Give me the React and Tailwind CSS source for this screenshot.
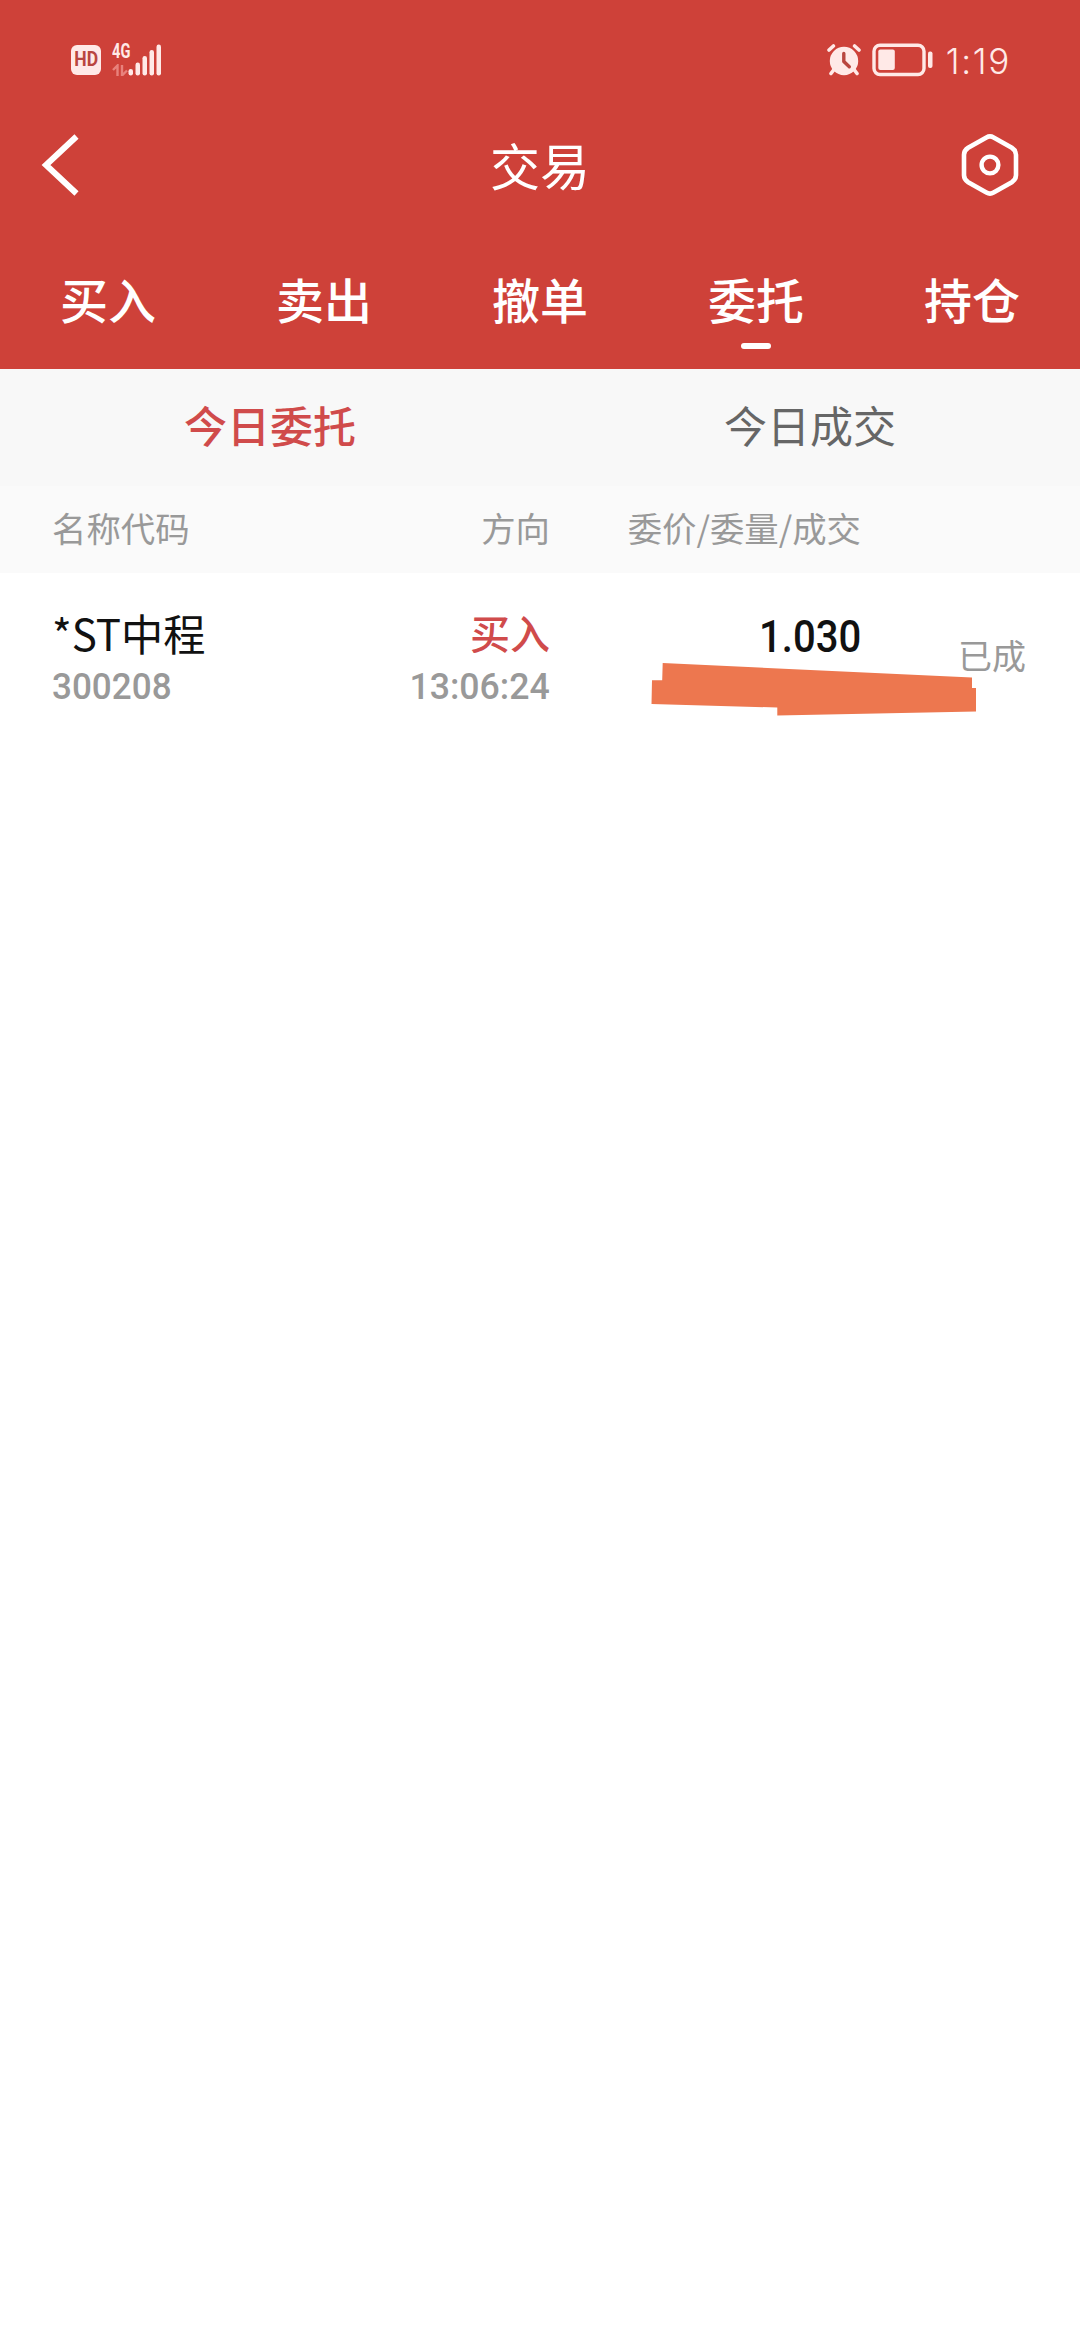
import { useState } from 'react';

const tabs = ['买入', '卖出', '撤单', '委托', '持仓'];
const subTabs = ['今日委托', '今日成交'];

const orders = [
  {
    id: 1,
    name: '*ST中程',
    code: '300208',
    side: '买入',
    time: '13:06:24',
    price: '1.030',
    status: '已成'
  }
];

const StatusBar = () => (
  <div className="h-[120px] pl-[71px] pr-[69px] flex items-center justify-between text-[#ffe9e7]">
    <div className="flex items-center">
      <div className="w-[30px] h-[30px] rounded-[6px] bg-[#ffe9e7] text-[#b9463f] flex items-center justify-center font-['Roboto',sans-serif] font-bold text-[19.5px] leading-none">
        <span className="inline-block scale-x-[0.9]">HD</span>
      </div>
      <div className="ml-[11px] w-[18px] h-[32px] flex flex-col justify-between">
        <span className="inline-block origin-left scale-x-[0.73] font-['Roboto',sans-serif] font-bold text-[20px] leading-[14px]">4G</span>
        <svg width="18" height="12" viewBox="0 0 18 12" fill="none" stroke="#e8827c" strokeWidth="2.4">
          <path d="M1 6L5.5 1.5V12M10 1V11.5L15 6.5" />
        </svg>
      </div>
      <svg className="-ml-[2px]" width="34" height="32" viewBox="0 0 34 32" fill="currentColor">
        <rect x="0.5" y="25" width="4.5" height="6.5" rx="2.2" />
        <rect x="7.5" y="18.5" width="4.5" height="13" rx="2.2" />
        <rect x="14.5" y="12" width="4.5" height="19.5" rx="2.2" />
        <rect x="21.5" y="6" width="4.5" height="25.5" rx="2.2" />
        <rect x="28.5" y="0.5" width="4.5" height="31" rx="2.2" />
      </svg>
    </div>

    <div className="flex items-center">
      <svg width="34" height="32" viewBox="0 0 34 32" fill="none" strokeLinecap="round">
        <circle cx="17" cy="17" r="14.2" fill="#ffe9e7" />
        <path d="M2 6L6.4 2M32 6L27.6 2" stroke="#ffe9e7" strokeWidth="3.6" />
        <path d="M7 25.5L4 29.5M27 25.5L30 29.5" stroke="#ffe9e7" strokeWidth="3.6" />
        <path d="M16.8 9.5V17.5L22.3 22.8" stroke="#b9463f" strokeWidth="3.4" strokeLinejoin="round" />
      </svg>
      <svg className="ml-[11px]" width="61" height="34" viewBox="0 0 61 34" fill="none">
        <rect x="2" y="2.2" width="50" height="29.3" rx="6" stroke="currentColor" strokeWidth="3.4" />
        <rect x="6.3" y="6.6" width="16.5" height="20.4" rx="2" fill="currentColor" />
        <rect x="56" y="8.5" width="4.5" height="16.5" rx="2" fill="currentColor" />
      </svg>
      <span className="ml-[13px] pt-[2px] font-['Inter',sans-serif] font-light text-[35px] leading-none tracking-[1.7px]">1:19</span>
    </div>
  </div>
);

const NavBar = () => (
  <div className="h-[90px] pl-[41px] pr-[60px] grid grid-cols-3 items-center">
    <svg width="38" height="62" viewBox="0 0 38 62" fill="none" stroke="white" strokeWidth="6">
      <path d="M35.5 2.5L5 31L35.5 59.5" />
    </svg>
    <h1 className="pl-[19px] pb-[3px] text-center text-[50px] leading-none">交易</h1>
    <svg className="justify-self-end" width="60" height="64" viewBox="0 0 60 64" fill="none" stroke="white">
      <path
        d="M26.4 4.4Q30 2.4 33.6 4.4L51.8 14.8Q56 17.5 56 21.8V42.2Q56 46.5 51.8 49.2L33.6 59.6Q30 61.6 26.4 59.6L8.2 49.2Q4 46.5 4 42.2V21.8Q4 17.5 8.2 14.8Z"
        strokeWidth="4.6"
      />
      <circle cx="30" cy="32" r="8.4" strokeWidth="4.4" />
    </svg>
  </div>
);

const OrderRow = ({ order }) => (
  <div className="relative h-[150px] pl-[52px] pr-[54px] pt-[34px] flex leading-none">
    <div className="w-[248px]">
      <div className="h-[50px] flex items-center text-[43px] text-[#111]">
        <span className="inline-block origin-left scale-x-[0.98] whitespace-nowrap">{order.name}</span>
      </div>
      <div className="h-[59px] flex items-center text-[#999]">
        <span className="inline-block origin-left scale-x-[0.935] font-['Roboto',sans-serif] font-medium text-[37.5px]">{order.code}</span>
      </div>
    </div>
    <div className="w-[250px] flex flex-col items-end">
      <div className="h-[50px] flex items-center text-[40px] font-medium text-[#d04b4b]">{order.side}</div>
      <div className="h-[59px] flex items-center text-[#999]">
        <span className="inline-block origin-right scale-x-[0.95] font-['Roboto',sans-serif] font-medium text-[37.5px]">{order.time}</span>
      </div>
    </div>
    <div className="w-[311px] h-[60px] flex items-center justify-end text-[#111]">
      <span className="inline-block origin-right scale-x-[0.91] font-['Roboto',sans-serif] font-medium text-[44px]">{order.price}</span>
    </div>
    <div className="flex-1 h-[96px] flex items-center justify-end text-[34px] text-[#999]">{order.status}</div>

    {/* Volume is covered by a marker stroke */}
    <svg className="absolute left-[651px] top-[89px]" width="326" height="54" viewBox="0 0 326 54">
      <path d="M11.7 1L321 15.5V26H325V49.5L126.3 53.5V45.5L0.5 42L1 18.3H11.2Z" fill="#ed774f" />
    </svg>
  </div>
);

const App = () => {
  const [activeTab, setActiveTab] = useState('委托');
  const [activeSubTab, setActiveSubTab] = useState('今日委托');

  return (
    <div className="w-[1080px] h-[2340px] overflow-hidden bg-white font-['Noto_Sans_CJK_SC',sans-serif]">
      {/* Header */}
      <header className="h-[369px] bg-[#ce4139] text-white">
        <StatusBar />
        <NavBar />
        <nav className="h-[159px] grid grid-cols-5">
          {tabs.map((tab) => (
            <button
              key={tab}
              onClick={() => setActiveTab(tab)}
              className="pt-[64px] flex flex-col items-center text-[48px] font-medium leading-[48px]"
            >
              {tab}
              {activeTab === tab && <span className="mt-[21px] w-[30px] h-[6px] rounded-[3px] bg-white"></span>}
            </button>
          ))}
        </nav>
      </header>

      {/* Sub tabs */}
      <div className="h-[117px] grid grid-cols-2 bg-[#f8f8f8]">
        {subTabs.map((tab) => (
          <button
            key={tab}
            onClick={() => setActiveSubTab(tab)}
            className={
              activeSubTab === tab
                ? 'pb-[6px] text-[43px] leading-none font-medium text-[#d04b4b]'
                : 'pb-[6px] text-[43px] leading-none text-[#666]'
            }
          >
            {tab}
          </button>
        ))}
      </div>

      {/* Column titles */}
      <div className="h-[87px] pl-[52px] pb-[4px] flex items-center bg-[#fafafa] text-[34.4px] leading-none text-[#999]">
        <span className="w-[248px]">名称代码</span>
        <span className="w-[250px] text-right">方向</span>
        <span className="w-[311px] text-right">委价/委量/成交</span>
      </div>

      {orders.map((order) => (
        <OrderRow key={order.id} order={order} />
      ))}
    </div>
  );
};

export default App;
